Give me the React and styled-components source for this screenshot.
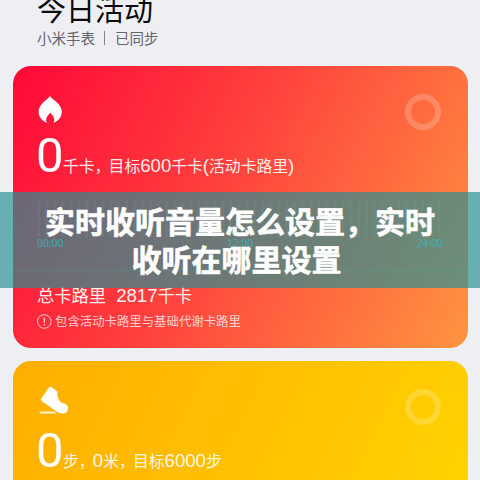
import React from "react";
import styled, { createGlobalStyle } from "styled-components";

const Global = createGlobalStyle`
  * { box-sizing: border-box; }
  body { margin: 0; overflow: hidden; }
`;

const Screen = styled.main`
  position: relative;
  width: 480px;
  height: 480px;
  overflow: hidden;
  background: #eeeff3;
  font-family: "Noto Sans CJK SC", sans-serif;
  white-space: nowrap;
`;

const Header = styled.header`
  height: 66px;
  padding-left: 37px;
  overflow: hidden;
`;

const Title = styled.h1`
  margin: -12px 0 0;
  font-size: 29px;
  line-height: 40px;
  font-weight: 400;
  color: #0b0b0d;
`;

const Status = styled.div`
  display: flex;
  align-items: center;
  height: 18px;
  margin-top: 1px;
  font-size: 14.5px;
  line-height: 18px;
  color: #64656a;
`;

const Divider = styled.i`
  width: 1px;
  height: 14px;
  margin: 0 10px 0 9px;
  background: #85868b;
`;

const Cards = styled.div`
  display: flex;
  flex-direction: column;
  gap: 13px;
  padding: 0 12.5px 0 13px;
`;

const Card = styled.section`
  height: 282px;
  flex: none;
  padding: 28px 26.5px 0 24px;
  border-radius: 18px;
  color: #fff;
  background: ${(p) => p.$fill};
`;

const CardTop = styled.div`
  display: flex;
  justify-content: space-between;
  height: 35px;
`;

const Ring = styled.span`
  width: 36px;
  height: 36px;
  border: 6px solid rgba(255, 255, 255, 0.2);
  border-radius: 50%;
`;

const Metric = styled.div`
  display: flex;
  align-items: baseline;
  height: 55px;
  line-height: 54px;
`;

const Value = styled.span`
  width: 27px;
  margin-left: -1px;
  font-family: Roboto, "Liberation Sans", sans-serif;
  font-size: 49px;
`;

const Goal = styled.span`
  display: flex;
  align-items: baseline;
  font-size: 15.8px;
  color: rgba(255, 255, 255, 0.92);
`;

const Digits = styled.span`
  font-family: "Liberation Sans", sans-serif;
  font-size: 18.6px;
`;

const Comma = styled.span`
  width: 14px;
`;

const Bars = styled.div`
  height: 36px;
  margin-top: 17px;
  opacity: 0.1;
  background: repeating-linear-gradient(90deg, #fff 0 3px, transparent 3px 8px);
`;

const Hours = styled.div`
  display: flex;
  justify-content: space-between;
  height: 16px;
  margin-right: -2px;
  font-family: "Noto Sans", sans-serif;
  font-size: 10.3px;
  line-height: 13px;
  color: rgba(110, 255, 255, 0.85);
`;

const Rule = styled.div`
  height: 1px;
  margin: 17px -26px 1px -24px;
  background: rgba(140, 255, 255, 0.2);
`;

const Total = styled.div`
  display: flex;
  align-items: baseline;
  margin-top: 12px;
  height: 25px;
  font-size: 17.3px;
  line-height: 24px;
  color: rgba(255, 255, 255, 0.94);
`;

const Amount = styled.span`
  margin-left: 10px;
`;

const Note = styled.div`
  display: flex;
  align-items: center;
  gap: 3px;
  height: 18px;
  margin-top: 4px;
  font-size: 12.4px;
  line-height: 18px;
  color: rgba(255, 255, 255, 0.75);
`;

const Banner = styled.div`
  position: absolute;
  left: 0;
  top: 192px;
  width: 480px;
  height: 96px;
  padding-top: 9px;
  background: rgba(37, 143, 148, 0.67);
  color: #fff;
  font-size: 30px;
  font-weight: 700;
  -webkit-text-stroke: 0.6px #fff;
  line-height: 38px;
  text-align: center;
`;

const BannerLine = styled.div`
  padding-right: ${(p) => p.$trim || 0}px;
`;

const Flame = () => (
  <svg width="26" height="30" viewBox="0 0 26 30" fill="#fff">
    <path d="M13 1.9C15.3 5.7 24.8 9.8 24.8 17.6C24.8 23.5 21 27.4 16 29.1C17.2 27.8 17.4 26.6 17.2 25C16.8 22.5 15.2 20.8 13.3 18.8C11.4 20.8 9.6 22.5 9.2 25C9 26.6 9.2 27.8 10.4 29.1C5.4 27.4 1.6 23.5 1.6 17.6C1.6 9.8 10.7 5.7 13 1.9Z" />
  </svg>
);

const Shoe = () => (
  <svg width="34" height="30" viewBox="0 0 34 30" fill="#fff">
    <path d="M12.2 -2.3Q13.2 -3.4 14.4 -2.6L20.2 1.6C20.2 6 21 9.5 23.4 12.2C25.8 14.6 31 14 31 17.8C31 22 28.6 24 25.8 24C21.5 24 18.5 21.8 16.2 19.5L4.8 11.6Q3.4 10.4 4.3 9Z" transform="translate(0 .6)" />
    <path d="M2.5 22.5H17L20 24.5H3.5Q2 24.2 2.5 22.5Z" opacity="0.8" />
  </svg>
);

const ShoeIcon = styled.span`
  display: flex;
  svg { overflow: visible; }
`;

const Alert = () => (
  <svg width="15" height="15" viewBox="0 0 15 15" fill="none" stroke="currentColor">
    <circle cx="7.3" cy="7.5" r="6.8" />
    <path d="M7.3 3.6V8.7M7.3 10V11.5" strokeWidth="1.3" />
  </svg>
);

export default function App() {
  return (
    <Screen>
      <Global />
      <Header>
        <Title>今日活动</Title>
        <Status>
          小米手表
          <Divider />
          已同步
        </Status>
      </Header>
      <Cards>
        <Card $fill="linear-gradient(117deg, #ff0838 0%, #ff423d 45%, #ff9540 100%)">
          <CardTop>
            <Flame />
            <Ring />
          </CardTop>
          <Metric>
            <Value>0</Value>
            <Goal>
              千卡<Comma>，</Comma>目标<Digits>600</Digits>千卡<Digits>(</Digits>活动卡路里<Digits>)</Digits>
            </Goal>
          </Metric>
          <Bars />
          <Hours>
            <span>00:00</span>
            <span>12:00</span>
            <span>24:00</span>
          </Hours>
          <Rule />
          <Total>
            总卡路里
            <Amount>
              <Digits>2817</Digits>千卡
            </Amount>
          </Total>
          <Note>
            <Alert />
            包含活动卡路里与基础代谢卡路里
          </Note>
        </Card>
        <Card $fill="linear-gradient(117deg, #ffae00 0%, #ffc000 45%, #ffd800 100%)">
          <CardTop>
            <ShoeIcon>
              <Shoe />
            </ShoeIcon>
            <Ring />
          </CardTop>
          <Metric>
            <Value>0</Value>
            <Goal>
              步<Comma>，</Comma><Digits>0</Digits>米<Comma>，</Comma>目标<Digits>6000</Digits>步
            </Goal>
          </Metric>
        </Card>
      </Cards>
      <Banner>
        <BannerLine>实时收听音量怎么设置，实时</BannerLine>
        <BannerLine $trim={7}>收听在哪里设置</BannerLine>
      </Banner>
    </Screen>
  );
}
